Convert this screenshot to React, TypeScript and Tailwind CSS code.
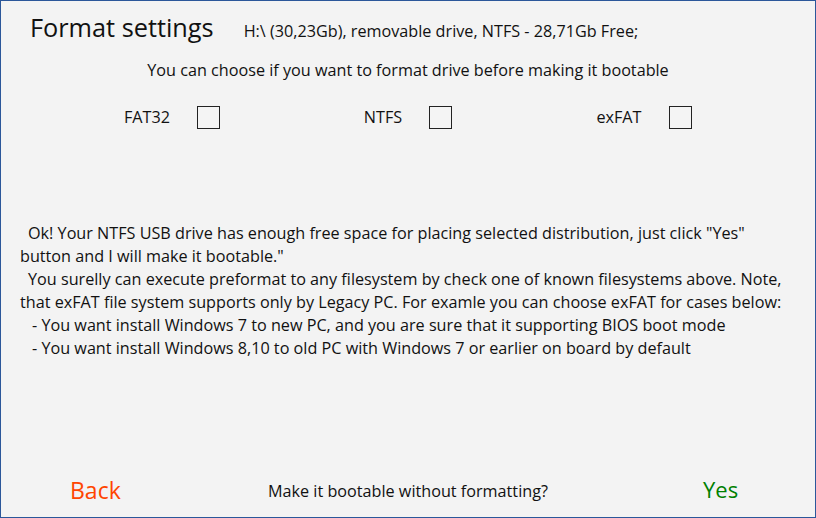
import React from 'react'

const font = { fontFamily: '"Open Sans", "Noto Sans", sans-serif' }

function FsOption({ label }: { label: string }) {
  return (
    <div className="flex items-center justify-center gap-[27px]">
      <span className="text-[16.2px] leading-[23px] text-[#111]">{label}</span>
      <div className="w-[23px] h-[23px] border border-[#222] bg-[#f4f4f4]" />
    </div>
  )
}

export default function App() {
  return (
    <div
      className="w-[816px] h-[518px] border border-[#2b579a] bg-[#f3f3f3] text-[#111] flex flex-col overflow-hidden"
      style={font}
    >
      {/* Header */}
      <div className="flex items-baseline pl-[29px] pt-[8px] h-[48px]">
        <span className="text-[25.3px] leading-[36px] text-[#111]">Format settings</span>
        <span className="ml-[30px] text-[16.2px]">H:\ (30,23Gb), removable drive, NTFS - 28,71Gb Free;</span>
      </div>

      <div className="text-center text-[16.2px] leading-[23px] mt-[10px]">
        You can choose if you want to format drive before making it bootable
      </div>

      {/* Filesystem options */}
      <div className="grid grid-cols-3 w-[708px] ml-[53px] mt-[24px]">
        <FsOption label="FAT32" />
        <FsOption label="NTFS" />
        <FsOption label="exFAT" />
      </div>

      {/* Info text */}
      <div className="mt-[93px] pl-[19px] text-[16.2px] leading-[23px] whitespace-nowrap">
        <div className="pl-[8px]">Ok! Your NTFS USB drive has enough free space for placing selected distribution, just click "Yes"</div>
        <div>button and I will make it bootable."</div>
        <div className="pl-[8px]">You surelly can execute preformat to any filesystem by check one of known filesystems above. Note,</div>
        <div>that exFAT file system supports only by Legacy PC. For examle you can choose exFAT for cases below:</div>
        <div className="pl-[12px]">- You want install Windows 7 to new PC, and you are sure that it supporting BIOS boot mode</div>
        <div className="pl-[12px]">- You want install Windows 8,10 to old PC with Windows 7 or earlier on board by default</div>
      </div>

      <div className="flex-1" />

      {/* Bottom actions */}
      <div className="relative h-[54px]">
        <button className="absolute left-[69px] top-[10px] text-[23px] text-[#ff4500]">Back</button>
        <span className="absolute left-[267px] top-[16px] text-[16.2px]">Make it bootable without formatting?</span>
        <button className="absolute left-[702px] top-[10px] text-[22px] text-[#008000]">Yes</button>
      </div>
    </div>
  )
}
